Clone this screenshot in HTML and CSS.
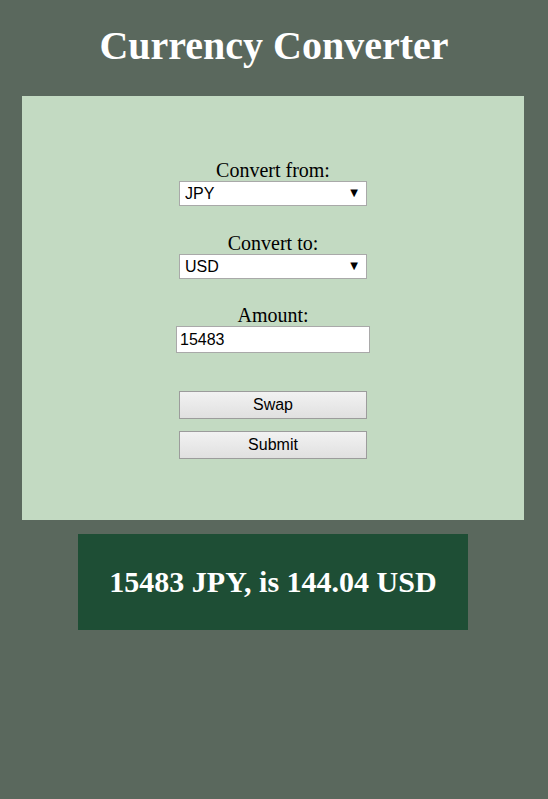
FILE: index.html
```html
<!DOCTYPE html>
<html>
<head>
<meta charset="utf-8">
<title>Currency Converter</title>
<link rel="stylesheet" href="styles.css">
</head>
<body>
<h1 class="title">Currency Converter</h1>
<form class="panel">
  <label class="field-label" for="from">Convert from:</label>
  <div class="select-wrap">
    <select id="from" class="select"><option>JPY</option><option>USD</option><option>EUR</option></select>
    <span class="arrow">▼</span>
  </div>
  <label class="field-label gap" for="to">Convert to:</label>
  <div class="select-wrap">
    <select id="to" class="select"><option>USD</option><option>JPY</option><option>EUR</option></select>
    <span class="arrow">▼</span>
  </div>
  <label class="field-label gap gap-amount" for="amount">Amount:</label>
  <input id="amount" class="amount" type="text" value="15483">
  <button type="button" class="btn btn-swap">Swap</button>
  <button type="button" class="btn btn-submit">Submit</button>
</form>
<div class="result">
  <h2 class="result-text">15483 JPY, is 144.04 USD</h2>
</div>
</body>
</html>
```
FILE: styles.css
```css
html, body {
  margin: 0;
  padding: 0;
  background: #5a685d;
  height: 100%;
}
body {
  font-family: "Liberation Serif", "Times New Roman", serif;
}
.title {
  margin: 0;
  padding-top: 23px;
  height: 96px;
  box-sizing: border-box;
  text-align: center;
  color: #ffffff;
  font-size: 40px;
  line-height: 46px;
  font-weight: bold;
}
.panel {
  width: 502px;
  margin: 0 auto 0 22px;
  background: #c3dac2;
  box-sizing: border-box;
  padding: 63px 0 61px;
  display: flex;
  flex-direction: column;
  align-items: center;
}
.field-label {
  display: block;
  font-size: 20px;
  line-height: 22px;
  height: 22px;
  color: #000;
  text-align: center;
}
.field-label.gap {
  margin-top: 26px;
}
.field-label.gap-amount {
  margin-top: 25px;
}
.select-wrap {
  position: relative;
  width: 188px;
  height: 25px;
}
.select {
  -webkit-appearance: none;
  appearance: none;
  width: 100%;
  height: 100%;
  box-sizing: border-box;
  border: 1px solid #a9a9a9;
  background: #ffffff;
  font-family: "Liberation Sans", Arial, sans-serif;
  font-size: 16px;
  color: #000;
  padding: 0 0 0 5px;
  margin: 0;
  border-radius: 0;
  outline: none;
}
.arrow {
  position: absolute;
  right: 9px;
  top: 6px;
  font-size: 10px;
  line-height: 12px;
  color: #000;
  pointer-events: none;
  font-family: "DejaVu Sans", sans-serif;
}
.amount {
  width: 194px;
  height: 27px;
  box-sizing: border-box;
  border: 1px solid #a9a9a9;
  background: #fff;
  font-family: "Liberation Sans", Arial, sans-serif;
  font-size: 16px;
  padding: 0 3px;
  margin: 0;
  outline: none;
  color: #000;
}
.btn {
  width: 188px;
  height: 28px;
  box-sizing: border-box;
  border: 1px solid #9c9c9c;
  background: linear-gradient(#f2f2f2, #e0e0e0);
  font-family: "Liberation Sans", Arial, sans-serif;
  font-size: 16px;
  color: #000;
  margin: 0;
  padding: 0;
  border-radius: 0;
}
.btn-swap {
  margin-top: 38px;
}
.btn-submit {
  margin-top: 12px;
}
.result {
  width: 390px;
  height: 96px;
  margin: 14px 0 0 78px;
  background: #1e4e35;
  display: flex;
  align-items: center;
  justify-content: center;
}
.result-text {
  margin: 0;
  color: #fff;
  font-size: 30px;
  font-weight: bold;
  line-height: 34px;
}
```
